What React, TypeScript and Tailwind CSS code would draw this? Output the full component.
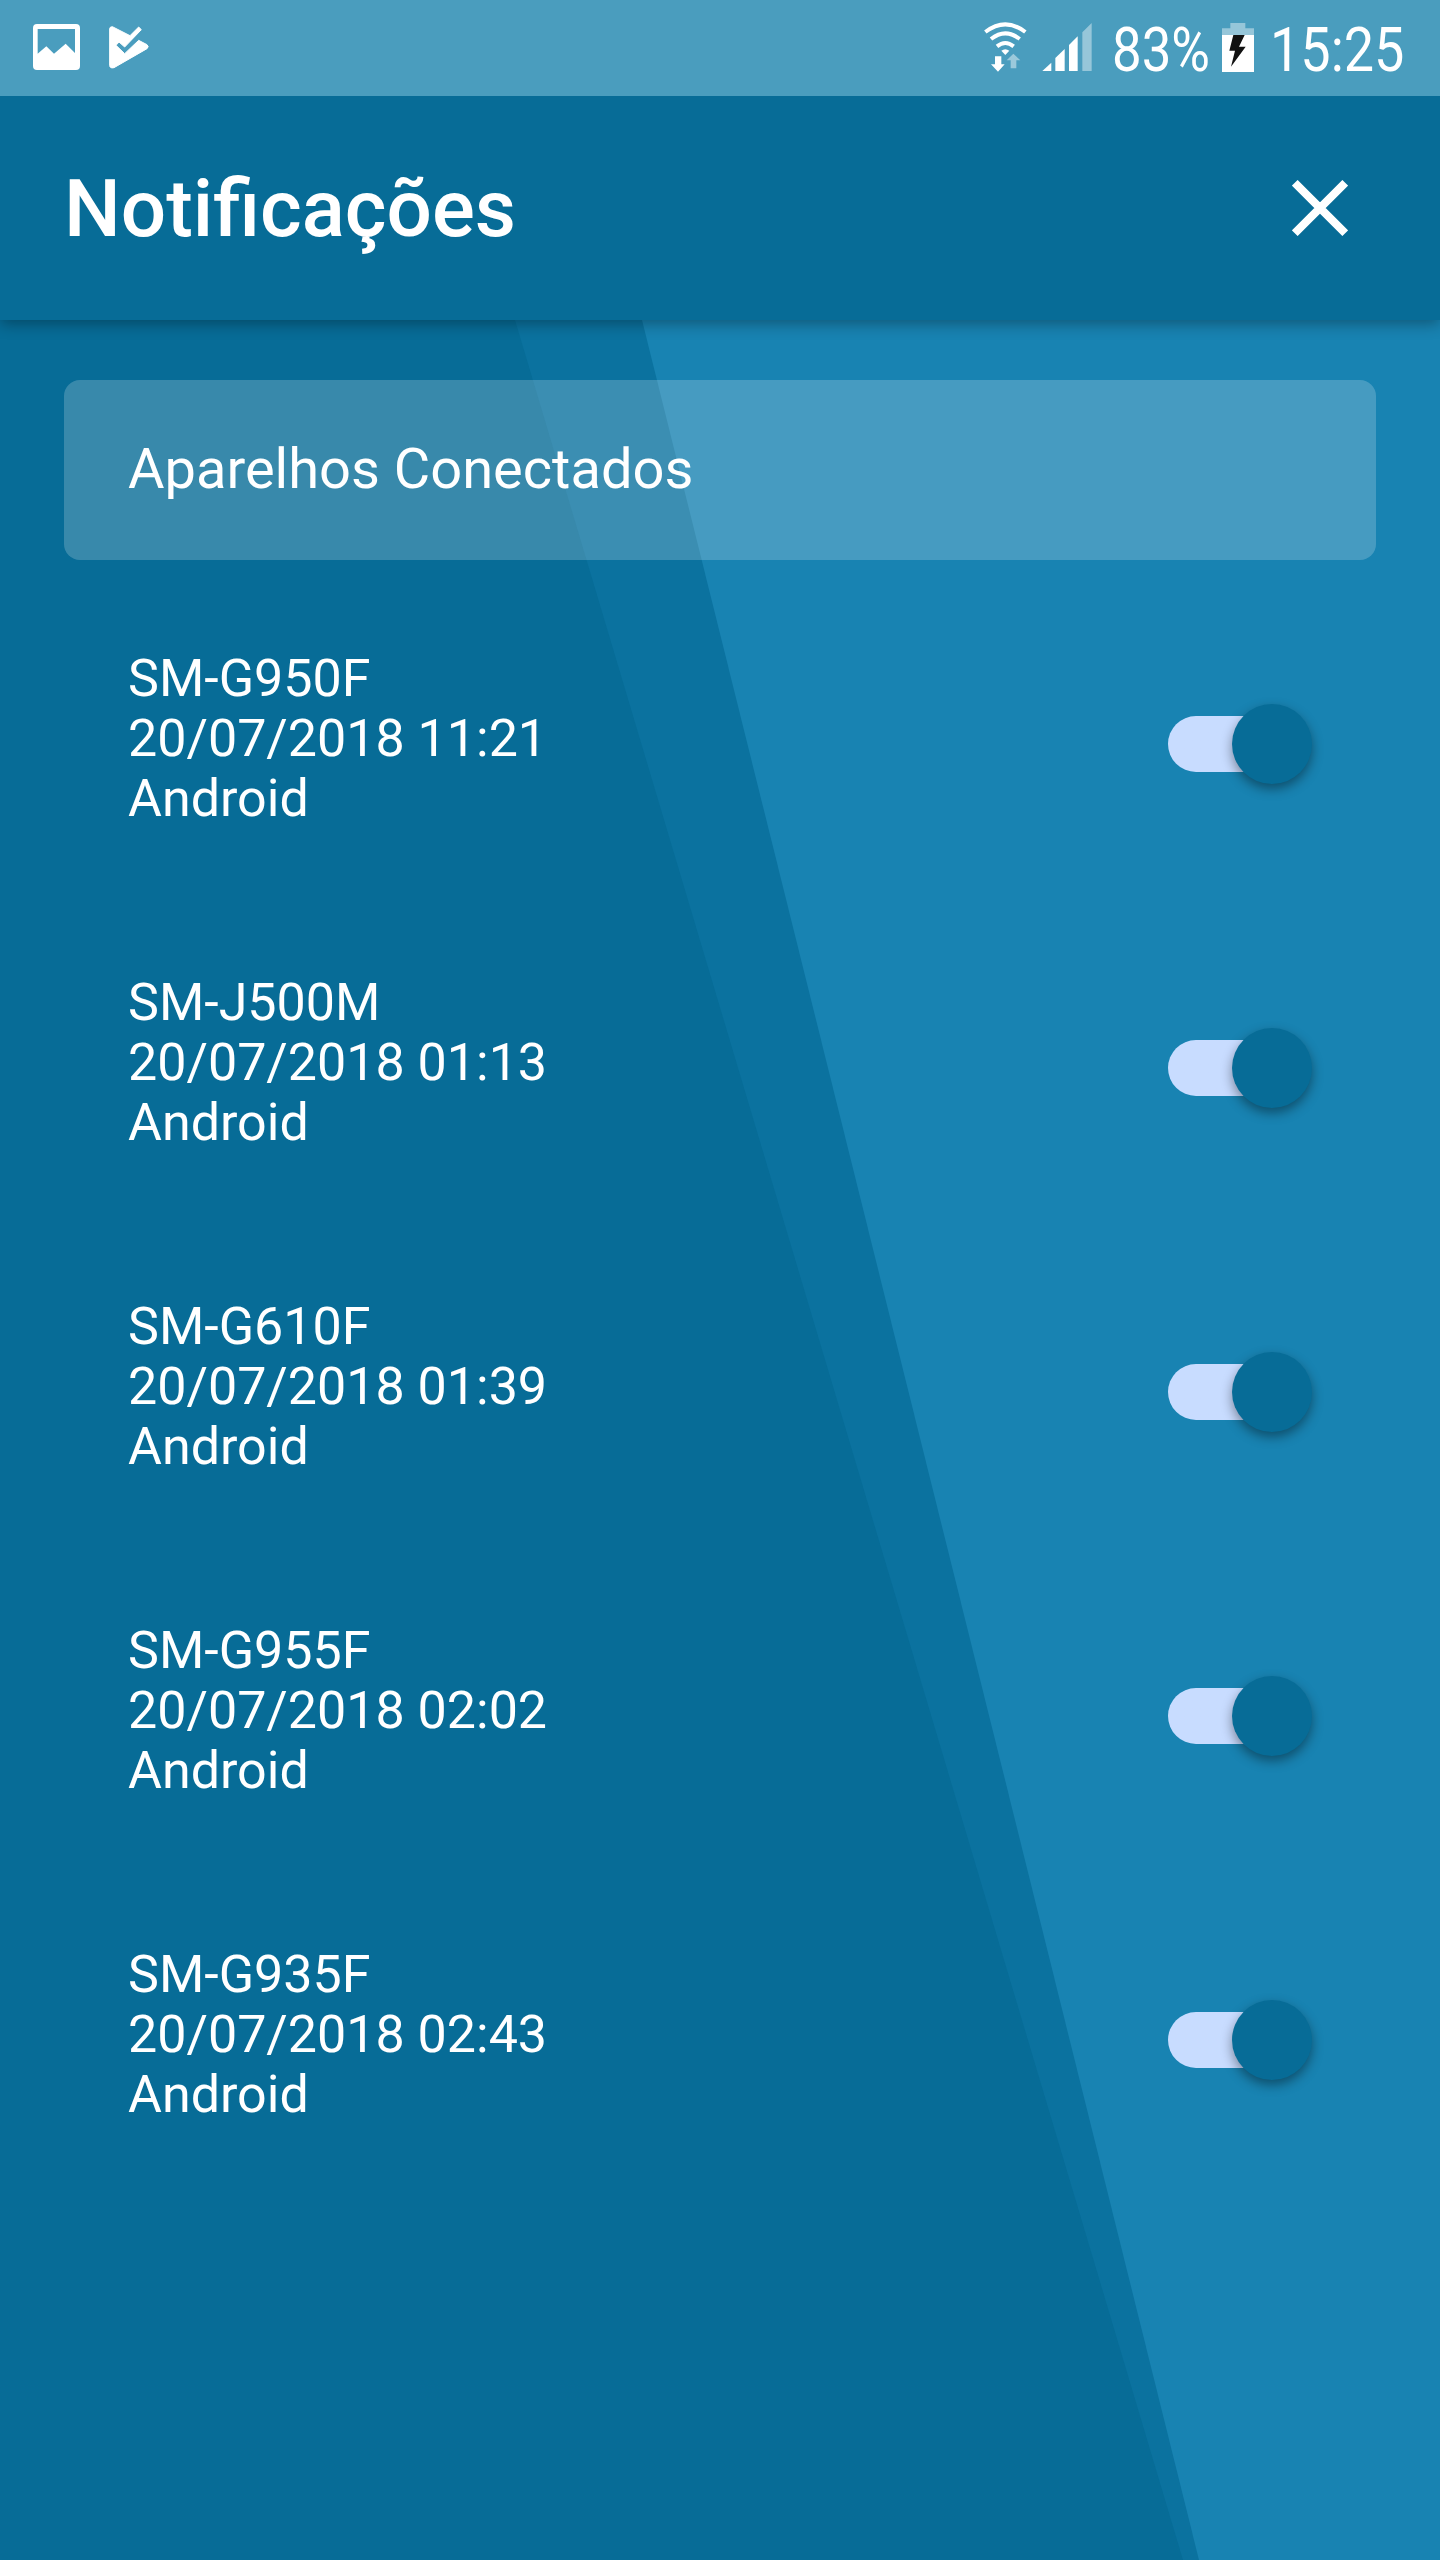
const devices = [
  { model: 'SM-G950F', date: '20/07/2018 11:21', platform: 'Android' },
  { model: 'SM-J500M', date: '20/07/2018 01:13', platform: 'Android' },
  { model: 'SM-G610F', date: '20/07/2018 01:39', platform: 'Android' },
  { model: 'SM-G955F', date: '20/07/2018 02:02', platform: 'Android' },
  { model: 'SM-G935F', date: '20/07/2018 02:43', platform: 'Android' },
];

function PictureIcon() {
  return (
    <svg className="h-[46px] w-[47px]" viewBox="0 0 141 138">
      <path
        fill="white"
        fillRule="evenodd"
        d="M12 0H129Q141 0 141 12V126Q141 138 129 138H12Q0 138 0 126V12Q0 0 12 0ZM14 15V89L40 67L63 89L98 59L126 87V15Z"
      />
    </svg>
  );
}

function PlayCheckIcon() {
  return (
    <svg className="h-[43px] w-[40px]" viewBox="0 0 120 129">
      <path
        fill="white"
        stroke="white"
        strokeWidth="3"
        strokeLinejoin="round"
        d="M2 9Q2 2 10 2L63 29L89 3L97 11L47 63L30 48L21 58L47 83L89 43L114 56Q121 62 114 68L15 125Q2 128 2 118Z"
      />
    </svg>
  );
}

function WifiIcon() {
  return (
    <svg className="h-[50px] w-[43px]" viewBox="0 0 129 150">
      <g fill="none" stroke="white" strokeWidth="12">
        <path d="M4 30Q64 -16 124 30" />
        <path d="M21 51Q64 17 107 51" />
        <path d="M39 73Q64 53 89 73" />
      </g>
      <path d="M52 86Q64 77 76 86L64 99Z" fill="white" />
      <path d="M33 103H52V127H62L42 149L21 127H33Z" fill="white" />
      <path d="M80 139H97V115H109L88 95L68 115H80Z" fill="white" opacity="0.45" />
    </svg>
  );
}

function SignalIcon() {
  return (
    <svg className="h-[48px] w-[50px]" viewBox="0 0 150 144">
      <g fill="white">
        <path d="M1 144L28 119V144Z" />
        <path d="M40 144V105L68 78V144Z" />
        <path d="M81 144V66L107 40V144Z" />
        <path d="M121 144V28L149 0V144Z" opacity="0.42" />
      </g>
    </svg>
  );
}

function BatteryIcon() {
  return (
    <svg className="h-[49px] w-[32px]" viewBox="0 0 96 147">
      <path d="M0 16H25V0H70V16H96V36H0Z" fill="white" opacity="0.42" />
      <path d="M0 36H96V147H0Z" fill="white" />
      <path d="M34 36H68L51 71H71L27 131L39 83H22Z" fill="#111111" />
    </svg>
  );
}

function StatusBar() {
  return (
    <div className="relative z-20 flex h-24 items-start bg-[#4a9dbe]">
      <div className="ml-[33px] mt-[24px]">
        <PictureIcon />
      </div>
      <div className="ml-[29px] mt-[26px]">
        <PlayCheckIcon />
      </div>
      <div className="ml-auto mt-[22px]">
        <WifiIcon />
      </div>
      <div className="ml-[15px] mt-[23px]">
        <SignalIcon />
      </div>
      <div className="ml-[20px] mt-[15px] w-[110px] origin-left scale-x-[0.865] whitespace-nowrap text-[61px] leading-[70px]">
        83%
      </div>
      <div className="mt-[23px]">
        <BatteryIcon />
      </div>
      <div className="ml-[16px] mt-[15px] w-[170px] origin-left scale-x-[0.885] whitespace-nowrap text-[61px] leading-[70px]">
        15:25
      </div>
    </div>
  );
}

function Header() {
  return (
    <header className="relative z-10 flex h-56 items-center justify-between bg-[#076c97] pl-16 pr-[92px] shadow-[0_4px_14px_rgba(0,0,0,0.32)]">
      <h1 className="pt-0.5 text-[80px] font-medium leading-[96px]">Notificações</h1>
      <button aria-label="Fechar">
        <svg className="h-14 w-14" viewBox="0 0 56 56" fill="none" stroke="white" strokeWidth="8">
          <path d="M2.8 2.8L53.2 53.2M53.2 2.8L2.8 53.2" />
        </svg>
      </button>
    </header>
  );
}

function Toggle() {
  return (
    <div className="flex h-14 w-36 items-center justify-end rounded-l-full bg-linear-to-r from-[#c8dcff] from-70% to-transparent to-70%">
      <div className="size-20 shrink-0 rounded-full bg-[#076c97] shadow-[0_5px_12px_rgba(0,0,0,0.4)]" />
    </div>
  );
}

function Backdrop() {
  return (
    <svg className="absolute inset-0 h-full w-full" viewBox="0 0 1440 2240" preserveAspectRatio="none">
      <path d="M0 0H1440V2240H0Z" fill="#1883b2" />
      <path d="M0 0H642L1199 2240H0Z" fill="#0b729f" />
      <path d="M0 0H515L1183 2240H0Z" fill="#076c97" />
    </svg>
  );
}

export default function App() {
  return (
    <div className="flex h-[2560px] w-[1440px] flex-col overflow-hidden font-['Roboto',sans-serif] text-white">
      <StatusBar />
      <Header />
      <main className="relative flex-1">
        <Backdrop />
        <div className="relative px-16 pt-[60px]">
          <h2 className="flex h-[180px] items-center rounded-2xl bg-white/20 px-16 pb-0.5 text-[56px] leading-[64px]">
            Aparelhos Conectados
          </h2>
          <ul className="pt-[22px]">
            {devices.map((device) => (
              <li key={device.model} className="flex h-[324px] items-center justify-between px-16">
                <div className="-mt-2.5 text-[52px] leading-[60px]">
                  <p>{device.model}</p>
                  <p>{device.date}</p>
                  <p>{device.platform}</p>
                </div>
                <Toggle />
              </li>
            ))}
          </ul>
        </div>
      </main>
    </div>
  );
}
